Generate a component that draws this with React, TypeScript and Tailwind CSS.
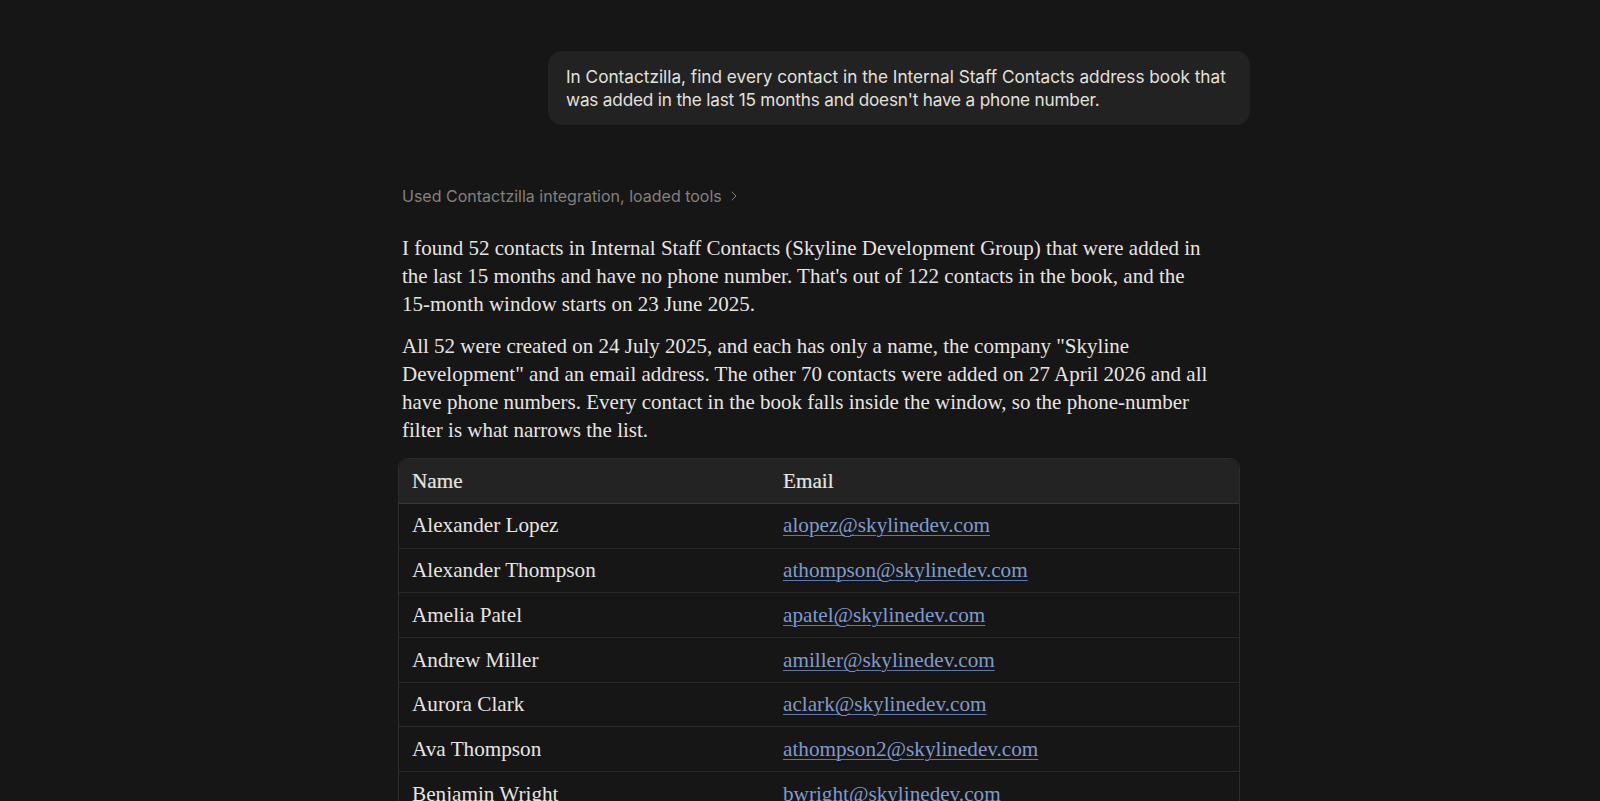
import { ChevronRight } from "lucide-react";

const rows = [
  ["Alexander Lopez", "alopez@skylinedev.com"],
  ["Alexander Thompson", "athompson@skylinedev.com"],
  ["Amelia Patel", "apatel@skylinedev.com"],
  ["Andrew Miller", "amiller@skylinedev.com"],
  ["Aurora Clark", "aclark@skylinedev.com"],
  ["Ava Thompson", "athompson2@skylinedev.com"],
  ["Benjamin Wright", "bwright@skylinedev.com"],
];

const serif = "font-['Liberation_Serif',serif]";

export default function App() {
  return (
    <div className="h-screen overflow-hidden bg-[#161616] flex flex-col items-center">
      <div className="w-[900px] pt-[51px] shrink-0">
        <div className="flex justify-end">
          <div className="w-[702px] h-[74px] rounded-[14px] bg-[#222222] px-[18px] pt-[14px] font-['Inter',sans-serif] text-[17.2px] leading-[23px] text-[#e2e1dc] whitespace-nowrap">
            In Contactzilla, find every contact in the Internal Staff Contacts address book that
            <br />
            <span className="tracking-[-0.19px]">was added in the last 15 months and doesn't have a phone number.</span>
          </div>
        </div>
        <div className="mt-[60px] ml-[52px] flex items-center gap-[4px] font-['Inter',sans-serif] text-[16px] leading-[22px] text-[#82817c]">
          <span>Used Contactzilla integration, loaded tools</span>
          <ChevronRight size={16} strokeWidth={1.5} />
        </div>
        <div className={`ml-[52px] mt-[27px] ${serif} text-[21px] leading-[28px] text-[#e6e5e0] whitespace-nowrap`}>
          <p>
            I found 52 contacts in Internal Staff Contacts (Skyline Development Group) that were added in
            <br />
            the last 15 months and have no phone number. That's out of 122 contacts in the book, and the
            <br />
            15-month window starts on 23 June 2025.
          </p>
          <p className="mt-[14px]">
            All 52 were created on 24 July 2025, and each has only a name, the company "Skyline
            <br />
            Development" and an email address. The other 70 contacts were added on 27 April 2026 and all
            <br />
            have phone numbers. Every contact in the book falls inside the window, so the phone-number
            <br />
            filter is what narrows the list.
          </p>
        </div>
        <div className={`ml-[48px] mt-[14px] w-[842px] rounded-t-[10px] border border-[#2c2c2c] ${serif} text-[21.2px] text-[#e6e5e0]`}>
          <div className="grid grid-cols-[370px_1fr] h-[45px] items-center px-[14px] pt-px bg-[#232323] rounded-t-[10px] border-b border-[#383838] [-webkit-text-stroke:0.2px]">
            <div className="-ml-px">Name</div>
            <div>Email</div>
          </div>
          {rows.map(([n, e]) => (
            <div key={e} className="grid grid-cols-[370px_1fr] h-[44.7px] items-center px-[14px] pt-px border-b border-[#282828]">
              <div className="-ml-px">{n}</div>
              <div>
                <a className="text-[#7f9bcc] underline underline-offset-[3px] decoration-1 decoration-[#5f78a6]">{e}</a>
              </div>
            </div>
          ))}
        </div>
      </div>
    </div>
  );
}
